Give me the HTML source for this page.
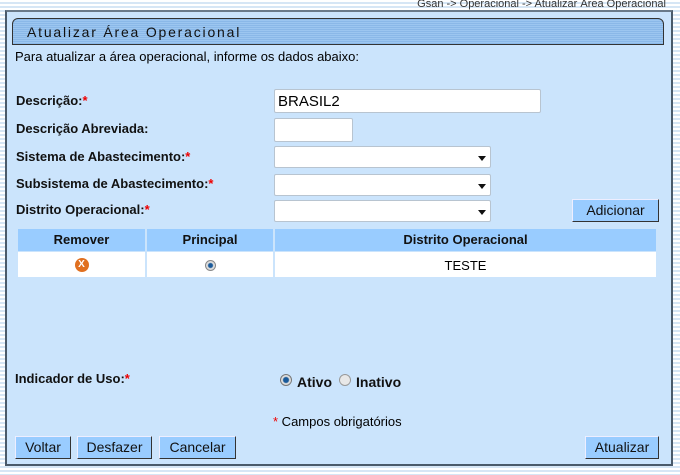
<!DOCTYPE html>
<html><head><meta charset="utf-8"><style>
*{margin:0;padding:0;box-sizing:border-box}
body{width:680px;height:475px;overflow:hidden;font-family:"Liberation Sans",Arial,sans-serif;font-size:13px;color:#000;
background:repeating-linear-gradient(#fff 0,#fff 2px,#d6e6f5 2px,#d6e6f5 4px);position:relative}
.a{position:absolute}
#bc{right:14px;top:-2px;font-size:11px;color:#333}
#panel{left:5px;top:10px;width:668px;height:456px;background:#cbe4fc;border:2px solid #4a5a6a;border-top-color:#6a7a8a}
#hdr{left:12px;top:18px;width:652px;height:27px;border:1px solid #333;border-radius:6px 6px 0 0;
background:repeating-linear-gradient(#8ab8e8 0,#8ab8e8 1px,#9cc6f0 1px,#9cc6f0 2px);}
#hdr span{position:absolute;left:14px;top:5px;font-size:14px;letter-spacing:1.8px;color:#111}
.lb{font-weight:bold;color:#111}
.r{color:#e00}
.in{background:#fff;border:1px solid #b8c4d0;border-radius:2px}
.sel::after{content:"";position:absolute;right:4px;top:9px;border:4px solid transparent;border-top:5px solid #111;border-bottom:0}
.btn{background:#99ccff;border:1px solid #333;border-top-color:#eef;border-left-color:#eef;height:23px;text-align:center;line-height:21px;font-size:14px;color:#111}
table{border-collapse:collapse}
</style></head><body>
<div class="a" id="bc">Gsan -&gt; Operacional -&gt; Atualizar Área Operacional</div>
<div class="a" id="panel"></div>
<div class="a" id="hdr"><span>Atualizar Área Operacional</span></div>
<div class="a" style="left:15px;top:49px">Para atualizar a área operacional, informe os dados abaixo:</div>

<div class="a lb" style="left:16px;top:93px">Descrição:<span class="r">*</span></div>
<div class="a in" style="left:274px;top:89px;width:267px;height:24px;font-size:15px;padding:3px 0 0 3px">BRASIL2</div>
<div class="a lb" style="left:16px;top:121px">Descrição Abreviada:</div>
<div class="a in" style="left:274px;top:118px;width:79px;height:24px"></div>
<div class="a lb" style="left:16px;top:149px">Sistema de Abastecimento:<span class="r">*</span></div>
<div class="a in sel" style="left:274px;top:146px;width:217px;height:22px"></div>
<div class="a lb" style="left:16px;top:176px">Subsistema de Abastecimento:<span class="r">*</span></div>
<div class="a in sel" style="left:274px;top:174px;width:217px;height:22px"></div>
<div class="a lb" style="left:16px;top:202px">Distrito Operacional:<span class="r">*</span></div>
<div class="a in sel" style="left:274px;top:200px;width:217px;height:22px"></div>
<div class="a btn" style="left:572px;top:199px;width:87px">Adicionar</div>

<table class="a" style="left:18px;top:229px;width:638px">
<tr style="background:#99ccff;height:22px;font-weight:bold;color:#111">
<td style="width:128px;text-align:center;border-right:2px solid #cbe4fc">Remover</td>
<td style="width:128px;text-align:center;border-right:2px solid #cbe4fc">Principal</td>
<td style="text-align:center">Distrito Operacional</td></tr>
<tr style="background:#fff;height:26px;border-top:1px solid #cbe4fc">
<td style="text-align:center;border-right:2px solid #cbe4fc"><span style="display:inline-block;width:14px;height:14px;border-radius:50%;background:#e07020;color:#fff;font-size:10px;font-weight:bold;line-height:14px;vertical-align:middle">X</span></td>
<td style="text-align:center;border-right:2px solid #cbe4fc"><span style="display:inline-block;width:11px;height:11px;border-radius:50%;border:1px solid #888;background:radial-gradient(#1a5a9a 0,#1a5a9a 2px,#ddd 3px);vertical-align:middle"></span></td>
<td style="text-align:center;padding-top:2px">TESTE</td></tr>
</table>

<div class="a lb" style="left:15px;top:371px">Indicador de Uso:<span class="r">*</span></div>
<div class="a" style="left:280px;top:374px;width:12px;height:12px;border-radius:50%;border:1px solid #777;background:radial-gradient(#1a5a9a 0,#1a5a9a 2.5px,#ddd 3.5px)"></div>
<div class="a lb" style="left:297px;top:374px;font-size:14px">Ativo</div>
<div class="a" style="left:339px;top:374px;width:12px;height:12px;border-radius:50%;border:1px solid #999;background:#e8e8e8"></div>
<div class="a lb" style="left:356px;top:374px;font-size:14px">Inativo</div>

<div class="a" style="left:273px;top:414px"><span class="r">*</span> Campos obrigatórios</div>

<div class="a btn" style="left:15px;top:436px;width:56px">Voltar</div>
<div class="a btn" style="left:77px;top:436px;width:75px">Desfazer</div>
<div class="a btn" style="left:159px;top:436px;width:77px">Cancelar</div>
<div class="a btn" style="left:585px;top:436px;width:74px">Atualizar</div>
</body></html>
